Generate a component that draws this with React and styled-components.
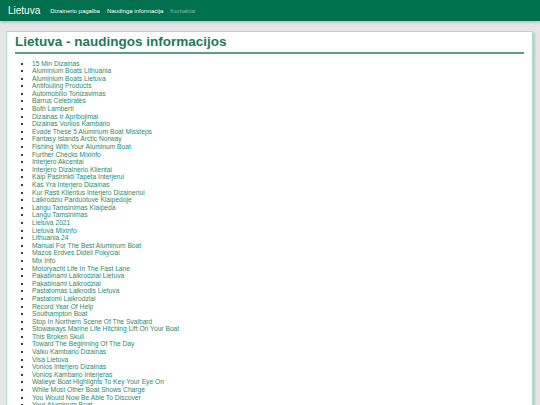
import styled, { createGlobalStyle } from "styled-components"

const GlobalStyle = createGlobalStyle`
  html, body {
    margin: 0;
    padding: 0;
    background: #e6e6e6;
    font-family: "Liberation Sans", Arial, sans-serif;
  }
`

const items = [
  "15 Min Dizainas",
  "Aluminium Boats Lithuania",
  "Aluminium Boats Lietuva",
  "Antifouling Products",
  "Automobilio Tonizavimas",
  "Barrus Celebrates",
  "Both Lamberti",
  "Dizainas Ir Apribojimai",
  "Dizainas Vonios Kambario",
  "Evade These 5 Aluminum Boat Missteps",
  "Fantasy Islands Arctic Norway",
  "Fishing With Your Aluminum Boat",
  "Further Checks Mixinfo",
  "Interjero Akcentai",
  "Interjero Dizainerio Klientai",
  "Kaip Pasirinkti Tapeta Interjerui",
  "Kas Yra Interjero Dizainas",
  "Kur Rasti Klientus Interjero Dizaineriui",
  "Laikrodziu Parduotuve Klaipedoje",
  "Langu Tamsinimas Klaipeda",
  "Langu Tamsinimas",
  "Lietuva 2021",
  "Lietuva Mixinfo",
  "Lithuania 24",
  "Manual For The Best Aluminum Boat",
  "Mazos Erdves Dideli Pokyciai",
  "Mix Info",
  "Motoryacht Life In The Fast Lane",
  "Pakabinami Laikrodziai Lietuva",
  "Pakabinami Laikrodziai",
  "Pastatomas Laikrodis Lietuva",
  "Pastatomi Laikrodziai",
  "Record Year Of Help",
  "Southampton Boat",
  "Stop In Northern Scene Of The Svalbard",
  "Stowaways Marine Life Hitching Lift On Your Boat",
  "This Broken Skull",
  "Toward The Beginning Of The Day",
  "Vaiku Kambario Dizainas",
  "Visa Lietuva",
  "Vonios Interjero Dizainas",
  "Vonios Kambario Interjeras",
  "Walleye Boat Highlights To Key Your Eye On",
  "While Most Other Boat Shows Charge",
  "You Would Now Be Able To Discover",
  "Your Aluminum Boat",
]

const Navbar = styled.nav`
  display: flex;
  align-items: center;
  height: 21px;
  padding: 0 8px;
  background: #00704f;
  box-shadow: 0 1px 3px rgba(0, 0, 0, 0.25);
`

const Brand = styled.a`
  color: #fff;
  font-size: 10px;
  text-decoration: none;
  margin-right: 10px;
`

const NavLink = styled.a`
  color: ${(p) => (p.$muted ? "rgba(255,255,255,0.5)" : "#fff")};
  font-size: 6px;
  text-decoration: none;
  margin-right: 7px;
`

const Main = styled.main`
  padding: 10px 7px 0 6px;
`

const Card = styled.section`
  background: #fff;
  border: 1px solid #a8dccb;
  box-shadow: 2px 2px 2px rgba(0, 0, 0, 0.15);
  padding: 1.5px 8px 10px;
`

const Title = styled.h1`
  margin: 0;
  font-size: 13.5px;
  line-height: 15.5px;
  font-weight: bold;
  color: #1c7a5a;
  padding-bottom: 3px;
  border-bottom: 2px solid #5b9f8b;
`

const List = styled.ul`
  margin: 5.5px 0 0;
  padding-left: 17px;
  font-size: 6.7px;
  line-height: 7.6px;
`

const Item = styled.li`
  color: #000;
`

const ItemLink = styled.a`
  color: #2b8a68;
  text-decoration: none;
`

export default function App() {
  return (
    <>
      <GlobalStyle />
      <Navbar>
        <Brand href="#">Lietuva</Brand>
        <NavLink href="#">Dizainerio pagalba</NavLink>
        <NavLink href="#">Naudinga informacija</NavLink>
        <NavLink href="#" $muted>Kontaktai</NavLink>
      </Navbar>
      <Main>
        <Card>
          <Title>Lietuva - naudingos informacijos</Title>
          <List>
            {items.map((t) => (
              <Item key={t}>
                <ItemLink href="#">{t}</ItemLink>
              </Item>
            ))}
          </List>
        </Card>
      </Main>
    </>
  )
}
